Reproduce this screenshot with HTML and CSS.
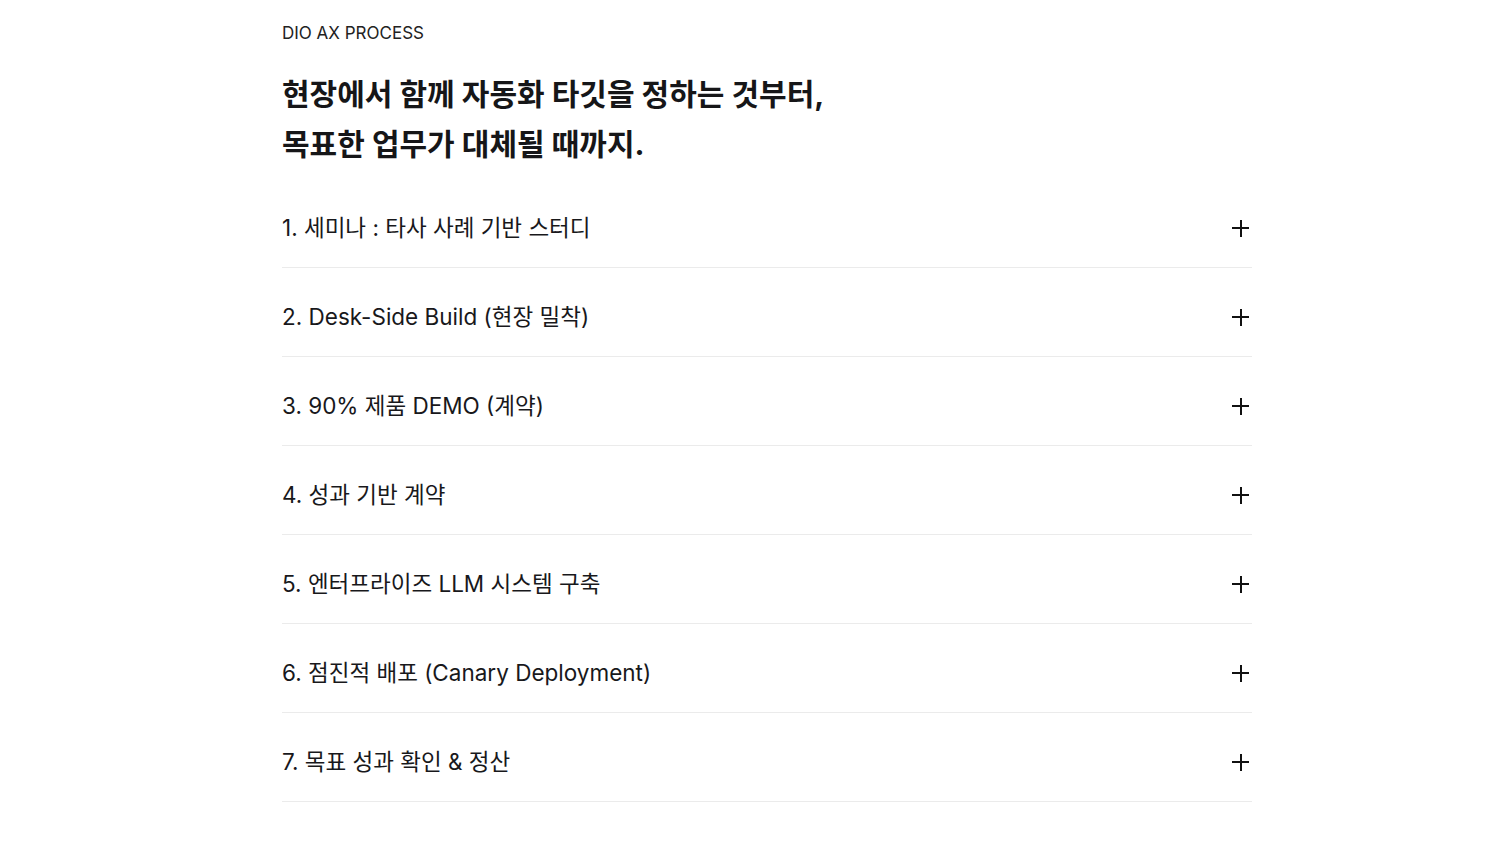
FILE: index.html
```html
<!DOCTYPE html>
<html lang="ko">
<head>
<meta charset="utf-8">
<link rel="stylesheet" href="styles.css">
</head>
<body>
<section class="process">
  <p class="eyebrow">DIO AX PROCESS</p>
  <h2 class="title">현장에서 함께 자동화 타깃을 정하는 것부터,<br>목표한 업무가 대체될 때까지.</h2>
  <ul class="list">
    <li class="item"><span class="item-text">1. 세미나 : 타사 사례 기반 스터디</span><span class="plus"></span></li>
    <li class="item"><span class="item-text">2. Desk-Side Build (현장 밀착)</span><span class="plus"></span></li>
    <li class="item"><span class="item-text">3. 90% 제품 DEMO (계약)</span><span class="plus"></span></li>
    <li class="item"><span class="item-text">4. 성과 기반 계약</span><span class="plus"></span></li>
    <li class="item"><span class="item-text">5. 엔터프라이즈 LLM 시스템 구축</span><span class="plus"></span></li>
    <li class="item"><span class="item-text">6. 점진적 배포 (Canary Deployment)</span><span class="plus"></span></li>
    <li class="item"><span class="item-text">7. 목표 성과 확인 &amp; 정산</span><span class="plus"></span></li>
  </ul>
</section>
</body>
</html>
```

FILE: styles.css
```css
html, body {
  margin: 0;
  padding: 0;
  background: #ffffff;
}
body {
  font-family: Inter, "Noto Sans CJK KR", sans-serif;
  color: #1b1b1f;
}
.process {
  width: 970px;
  margin: 0 0 0 282px;
  padding-top: 21px;
}
.eyebrow {
  margin: 0;
  font-size: 17px;
  line-height: 24px;
  font-weight: 400;
  color: #222;
}
.title {
  margin: 24px 0 10px;
  font-size: 30px;
  line-height: 50px;
  font-weight: 700;
  color: #161618;
}
.list {
  list-style: none;
  margin: 0;
  padding: 0;
}
.item {
  display: flex;
  align-items: center;
  justify-content: space-between;
  padding: 34px 0 24px;
  border-bottom: 1px solid #ebebeb;
}
.item-text {
  font-size: 22.5px;
  line-height: 30px;
  color: #18181b;
}
.plus {
  position: relative;
  width: 17px;
  height: 17px;
  margin-right: 3px;
}
.plus::before,
.plus::after {
  content: "";
  position: absolute;
  background: #111;
}
.plus::before {
  left: 0;
  top: 7.5px;
  width: 17px;
  height: 2px;
}
.plus::after {
  top: 0;
  left: 7.5px;
  width: 2px;
  height: 17px;
}
```
